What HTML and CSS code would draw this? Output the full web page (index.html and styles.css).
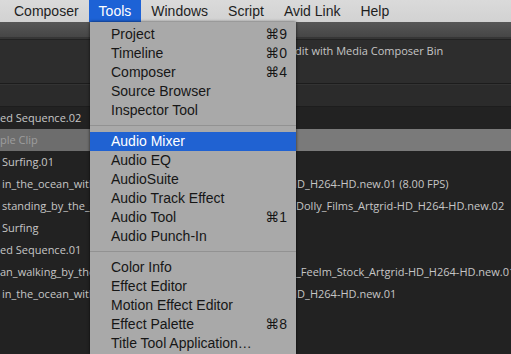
FILE: index.html
```html
<!DOCTYPE html>
<html lang="en">
<head>
	<meta charset="UTF-8">
	<title>Tools menu</title>
<link rel="stylesheet" href="styles.css">
</head>
<body>
	<div id="menubar">
		<span class="top">Composer</span>
		<span class="top on">Tools</span>
		<span class="top">Windows</span>
		<span class="top">Script</span>
		<span class="top">Avid Link</span>
		<span class="top">Help</span>
	</div>
	<div id="app">
		<div class="toolbar"></div>
		<div class="panel">
			<div class="row"><span class="name"></span><span class="info cut">Edit with Media Composer Bin</span></div>
		</div>
		<div class="panel-bar"></div>
		<div id="bin">
			<div class="row"><span class="name">ed Sequence.02</span><span class="info"></span></div>
			<div class="row sel"><span class="name">ple Clip</span><span class="info"></span></div>
			<div class="row"><span class="name ind">Surfing.01</span><span class="info"></span></div>
			<div class="row"><span class="name ind">in_the_ocean_with_surfboard</span><span class="info cut">HD_H264-HD.new.01 (8.00 FPS)</span></div>
			<div class="row"><span class="name ind">standing_by_the_sea</span><span class="info">Dolly_Films_Artgrid-HD_H264-HD.new.02</span></div>
			<div class="row"><span class="name ind">Surfing</span><span class="info"></span></div>
			<div class="row"><span class="name">ed Sequence.01</span><span class="info"></span></div>
			<div class="row"><span class="name">an_walking_by_the_sea</span><span class="info">_Feelm_Stock_Artgrid-HD_H264-HD.new.01</span></div>
			<div class="row"><span class="name ind">in_the_ocean_with_surfboard</span><span class="info cut">HD_H264-HD.new.01</span></div>
		</div>
	</div>
	<div id="menu">
		<div class="item">Project<span class="key">&#8984;9</span></div>
		<div class="item">Timeline<span class="key">&#8984;0</span></div>
		<div class="item">Composer<span class="key">&#8984;4</span></div>
		<div class="item">Source Browser</div>
		<div class="item">Inspector Tool</div>
		<div class="sep"></div>
		<div class="item on">Audio Mixer</div>
		<div class="item">Audio EQ</div>
		<div class="item">AudioSuite</div>
		<div class="item">Audio Track Effect</div>
		<div class="item">Audio Tool<span class="key">&#8984;1</span></div>
		<div class="item">Audio Punch-In</div>
		<div class="sep"></div>
		<div class="item">Color Info</div>
		<div class="item">Effect Editor</div>
		<div class="item">Motion Effect Editor</div>
		<div class="item">Effect Palette<span class="key">&#8984;8</span></div>
		<div class="item">Title Tool Application&#8230;</div>
	</div>
</body>
</html>
```

FILE: styles.css
```css
* {
	margin: 0;
	padding: 0;
}
body {
	width: 511px;
	height: 354px;
	overflow: hidden;
	position: relative;
	background: #222;
	font-family: "Liberation Sans", Arial, sans-serif;
}
#menubar {
	height: 22px;
	display: flex;
	padding-left: 4px;
	background: linear-gradient(#dadada, #d2d2d2);
	font-size: 14px;
	line-height: 22px;
	color: #1e1e1e;
}
#menubar .top {
	padding: 0 10px;
}
#menubar .on {
	background: #1d62d6;
	color: #fff;
}
#app {
	font-family: "Open Sans", sans-serif;
	font-size: 11px;
	color: #c6c6c6;
}
.toolbar {
	height: 15px;
	background: linear-gradient(#575757, #464646);
	border-bottom: 2px solid #363636;
}
.panel {
	height: 43px;
	background: #2d2d2d;
	border-bottom: 1px solid #1c1c1c;
}
.panel-bar {
	height: 21px;
	background: #2b2b2b;
	border-top: 1px solid #333;
	border-bottom: 1px solid #1d1d1d;
}
.row {
	display: flex;
	height: 22px;
	line-height: 22px;
	white-space: nowrap;
}
.panel .row {
	margin-top: 1px;
}
.name {
	width: 90px;
	flex: none;
	overflow: hidden;
}
.name.ind {
	width: 88px;
	padding-left: 2px;
}
.info {
	flex: 1;
	margin-left: 206px;
}
.info.cut {
	margin-left: 199px;
}
.sel {
	background: #6d6d6d;
	color: #9d9d9d;
}
.sel .info {
	background: #7a7a7a;
}
#menu {
	position: absolute;
	left: 90px;
	top: 22px;
	bottom: 0;
	width: 206px;
	padding-top: 3px;
	background: #a9a9a9;
	box-shadow: 0 0 3px rgba(0,0,0,0.7);
	font-size: 14px;
	color: #161616;
}
#menu .item {
	display: flex;
	justify-content: space-between;
	height: 19px;
	line-height: 19px;
	padding: 0 9px 0 21px;
}
#menu .on {
	background: #2062d2;
	color: #fff;
}
#menu .key {
	font-family: "Liberation Sans", "DejaVu Sans", sans-serif;
}
#menu .sep {
	height: 1px;
	margin: 5px 0 6px;
	background: #929292;
}
```
